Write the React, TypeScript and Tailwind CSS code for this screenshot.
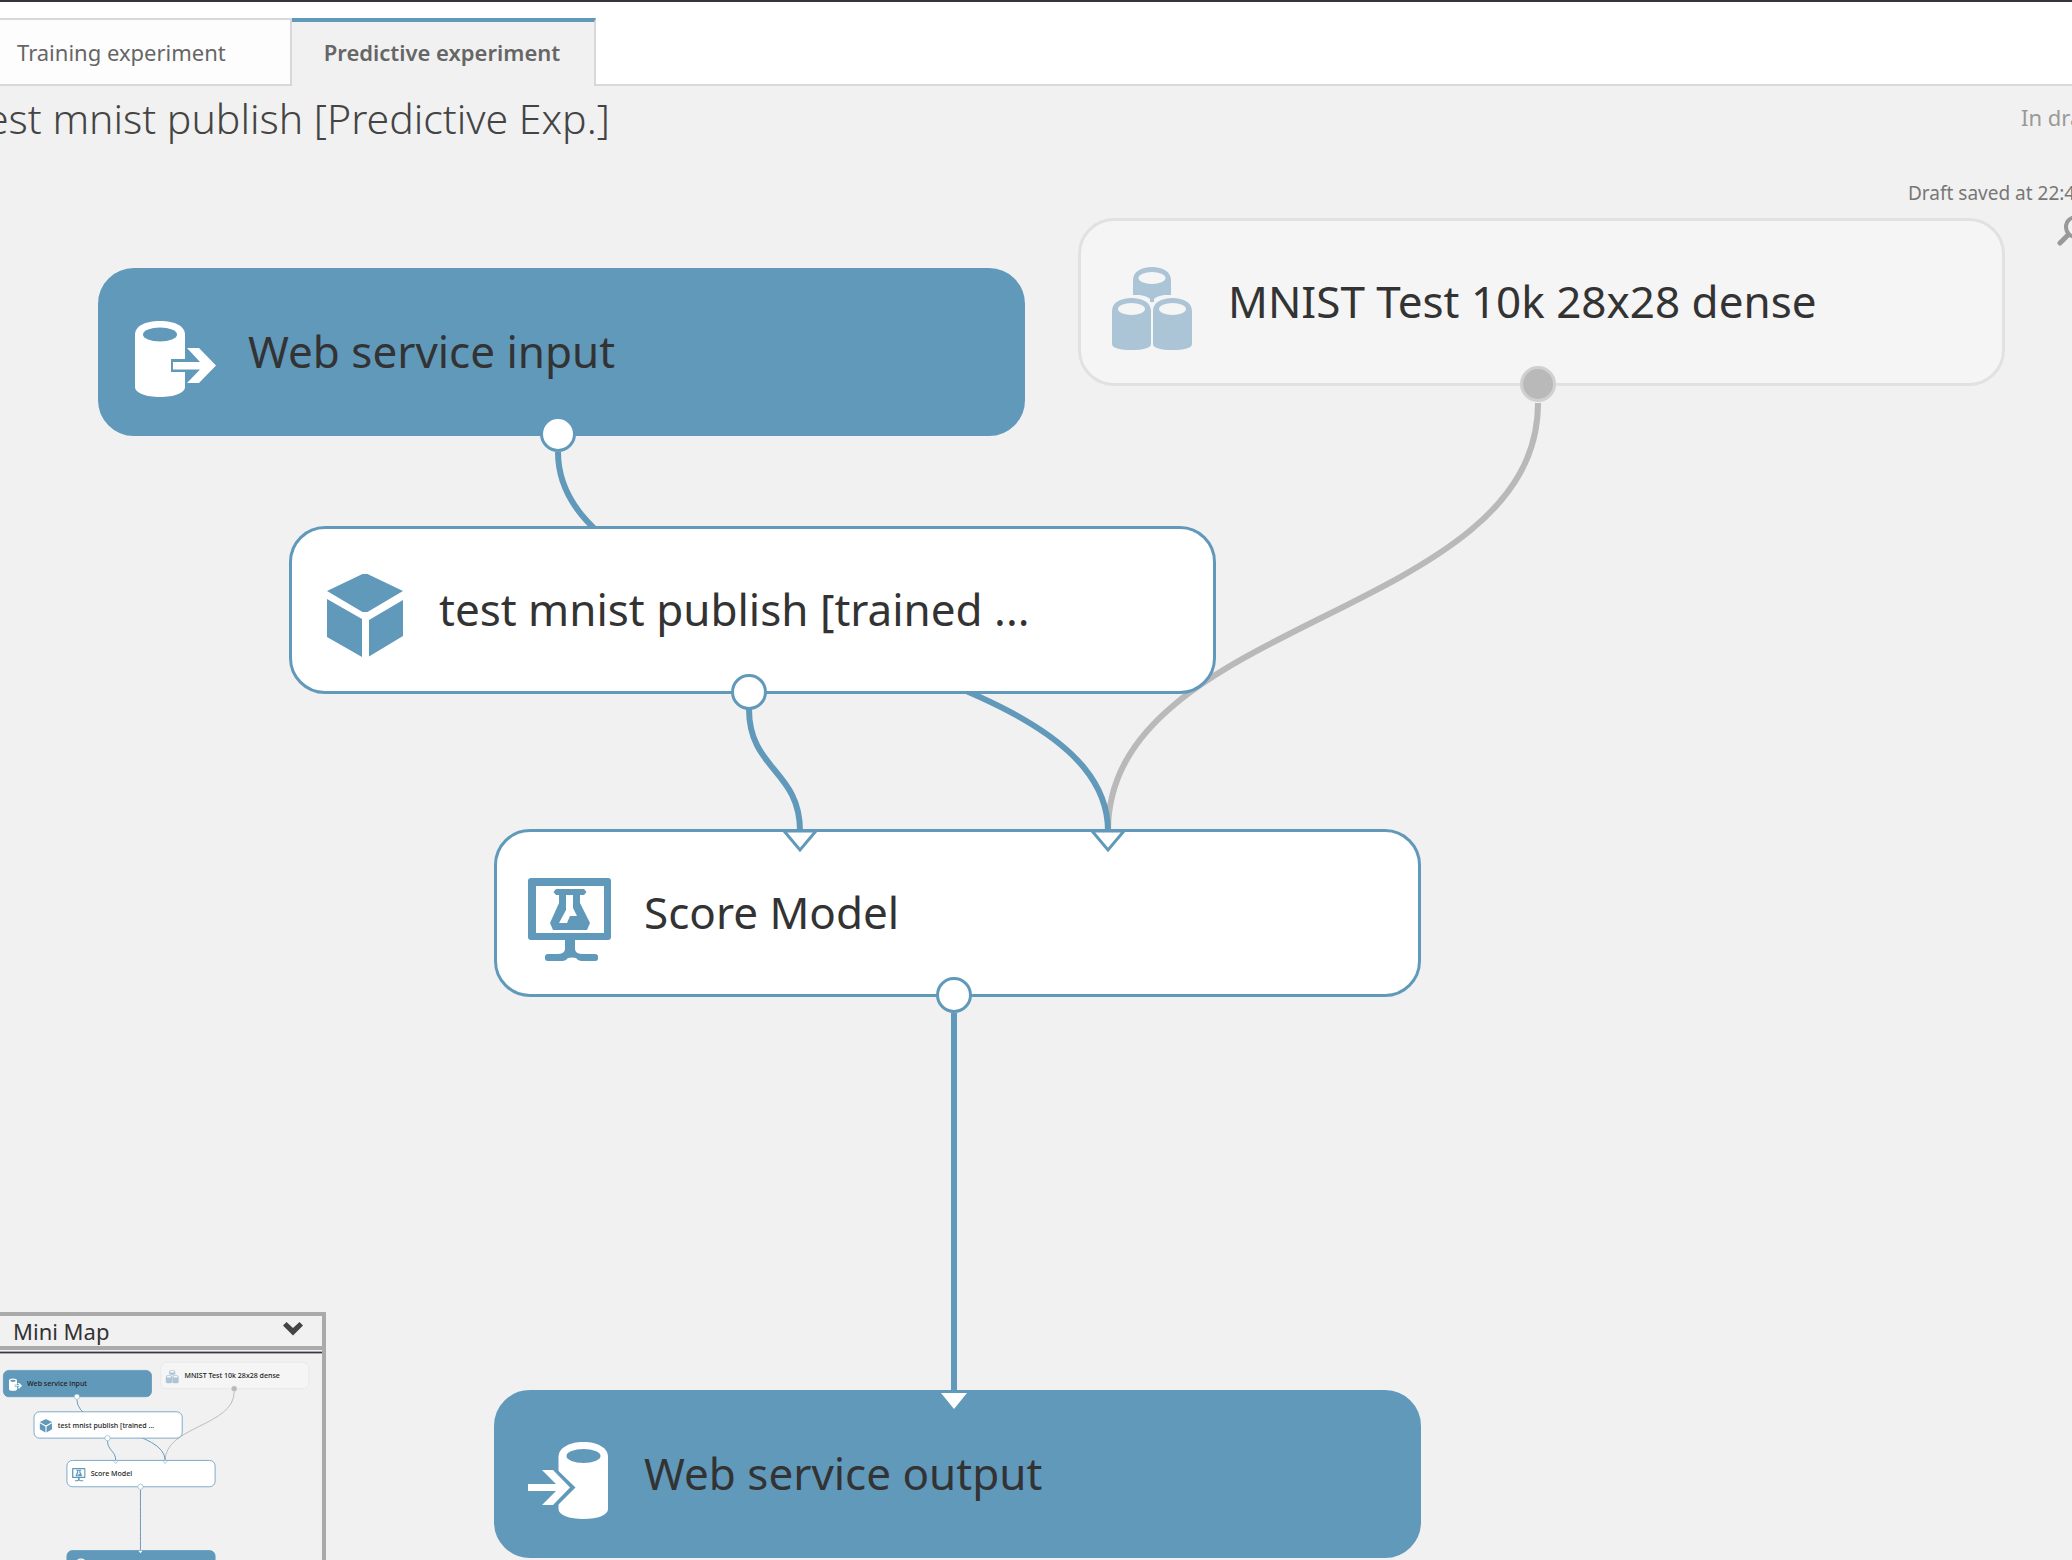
import React from "react";

type IconName = "input" | "dataset" | "model" | "score" | "output";
type Tone = "solid" | "plain" | "muted";

interface GraphNode {
  id: string;
  label: string;
  icon: IconName;
  tone: Tone;
  x: number;
  y: number;
  inputs: number[];
  output?: number;
}

const BLUE = "#6199bb";
const NODE_W = 927;
const NODE_H = 168;

const nodes: GraphNode[] = [
  { id: "in", label: "Web service input", icon: "input", tone: "solid", x: 98, y: 58, inputs: [], output: 460 },
  { id: "data", label: "MNIST Test 10k 28x28 dense", icon: "dataset", tone: "muted", x: 1078, y: 8, inputs: [], output: 460 },
  { id: "model", label: "test mnist publish [trained ...", icon: "model", tone: "plain", x: 289, y: 316, inputs: [], output: 460 },
  { id: "score", label: "Score Model", icon: "score", tone: "plain", x: 494, y: 619, inputs: [306, 614], output: 460 },
  { id: "out", label: "Web service output", icon: "output", tone: "solid", x: 494, y: 1180, inputs: [460] },
];

const edges = [
  { id: "data-score", from: [1538, 193], to: [1108, 621], color: "#b9b9b9" },
  { id: "in-score", from: [558, 242], to: [1108, 621], color: BLUE },
  { id: "model-score", from: [749, 499], to: [800, 621], color: BLUE },
  { id: "score-out", from: [954, 803], to: [954, 1182], color: BLUE },
];

function edgePath(from: number[], to: number[]) {
  const mid = (from[1] + to[1]) / 2;
  return `M${from[0]} ${from[1]}C${from[0]} ${mid} ${to[0]} ${mid} ${to[0]} ${to[1]}`;
}

function Edges() {
  return (
    <g fill="none" strokeWidth="6">
      {edges.map((e) => (
        <path key={e.id} d={edgePath(e.from, e.to)} stroke={e.color} />
      ))}
    </g>
  );
}

function IconShape({ name }: { name: IconName }) {
  if (name === "input")
    return (
      <g>
        <path fill="#fff" d="M5 21C5 12 15 7 30 7s25 5 25 14v52c0 6-11 10-25 10S5 79 5 73Z" />
        <ellipse cx="30" cy="20.500" rx="17" ry="7" fill={BLUE} />
        <path fill={BLUE} d="M41 45h16v13H41Z" />
        <path fill="#fff" d="M43 48h27L57 34h12l17 17.500L69 69H57l13-13.500H43Z" />
      </g>
    );
  if (name === "output")
    return (
      <g>
        <path fill="#fff" d="M32.500 21C32.500 12 43 6 57.500 6S82 12 82 21v52c0 6-10 10-24.500 10s-25-4-25-10Z" />
        <ellipse cx="57.500" cy="20" rx="17" ry="7" fill={BLUE} />
        <path fill={BLUE} d="M32 34.500 49.500 51.500 32 69Z" />
        <path fill="#fff" d="M2 48h28L16 34h11l17 17.500L27 69H16l14-14H2Z" />
      </g>
    );
  if (name === "dataset")
    return (
      <path
        fill="#abc5d7"
        fillRule="evenodd"
        d="M23 16C23 8 31 3 42 3s19 5 19 13v15h-4c-6 0-11 2-13 4v3h-4v-3c-2-2-7-4-13-4h-4ZM28.500 14a13.500 6 0 1 0 27 0a13.500 6 0 1 0-27 0ZM2 47C2 39 10 34 21.500 34S41 39 41 47v33c0 4-8 6-19.500 6S2 84 2 80ZM8 45a13.500 6 0 1 0 27 0a13.500 6 0 1 0-27 0ZM43 47c0-8 8-13 19.500-13S82 39 82 47v33c0 4-8 6-19.500 6S43 84 43 80ZM49 45a13.500 6 0 1 0 27 0a13.500 6 0 1 0-27 0Z"
      />
    );
  if (name === "model")
    return (
      <path
        fill={BLUE}
        d="M41.500 2h5L82 19 46.500 40h-5L6 19ZM6 27l35 20v38L6 65ZM82 28v36L48 84.500V48Z"
      />
    );
  return (
    <g fill={BLUE}>
      <path
        fillRule="evenodd"
        d="M5 3h77q3 0 3 3v56q0 3-3 3H49v9q0 5 8 5h12q3 0 3 2.500v2q0 2.500-3 2.500H55q-3 0-5-3-4-1-8 0-2 3-5 3H22q-3 0-3-2.500v-2q0-2.500 3-2.500h9q8 0 8-5v-9H5q-3 0-3-3V6q0-3 3-3ZM10 11v47h68V11Z"
      />
      <path
        fillRule="evenodd"
        d="M30 14h28l2.500 3-2.500 3h-4v8l10 20-3 7H27l-3-7 9-20v-8h-3l-2.500-3ZM40 20v15l-7 13h8l3-7h7l-4-8V20Z"
      />
    </g>
  );
}

const frame: Record<Tone, string> = {
  solid: "border-[#6199bb] bg-[#6199bb]",
  plain: "border-[#6199bb] bg-white",
  muted: "border-[#e1e1e1] bg-[#f5f5f5]",
};

function Ports({ node }: { node: GraphNode }) {
  const muted = node.tone === "muted";
  return (
    <g strokeWidth="3">
      {node.inputs.map((x) =>
        node.tone === "solid" ? (
          <path key={x} d={`M${x - 13} 3h26l-13 16Z`} fill="#fff" />
        ) : (
          <path key={x} d={`M${x - 16} 2h32l-16 19Z`} fill="#fff" stroke={BLUE} />
        ),
      )}
      {node.output !== undefined && (
        <circle cx={node.output} cy={NODE_H - 2} r="16.500" fill={muted ? "#b9b9b9" : "#fff"} stroke={muted ? "#d0d0d0" : BLUE} />
      )}
    </g>
  );
}

function NodeCard({ node }: { node: GraphNode }) {
  return (
    <article
      className={`absolute flex h-[168px] w-[927px] items-center gap-[30px] rounded-[36px] border-[3px] pt-3 pl-[29px] ${frame[node.tone]}`}
      style={{ left: node.x, top: node.y }}
    >
      <svg viewBox="0 0 88 88" className="size-[88px] shrink-0" aria-hidden="true">
        <IconShape name={node.icon} />
      </svg>
      <h2 className="pb-[14px] text-[44px] leading-[60px] whitespace-nowrap text-[#333]">{node.label}</h2>
      <svg viewBox="0 0 927 168" className="pointer-events-none absolute -top-[3px] -left-[3px] h-[168px] w-[927px] overflow-visible" aria-hidden="true">
        <Ports node={node} />
      </svg>
    </article>
  );
}

function MiniMap() {
  return (
    <aside className="absolute bottom-0 left-0 flex h-[248px] w-[326px] flex-col border-t-4 border-r-4 border-[#aaa] bg-[#f1f1f1]">
      <header className="flex h-[34px] items-center justify-between border-b-4 border-[#aaa] pr-[18px] pl-[13px]">
        <h2 className="text-[22px] leading-[30px] text-[#333]">Mini Map</h2>
        <button type="button" aria-label="Collapse mini map" className="pb-1">
          <svg viewBox="0 0 22 16" className="h-4 w-[22px]" aria-hidden="true">
            <path d="M1 4.500 4.500 1 11 7l6.500-6L21 4.500 11 14.500Z" fill="#444" />
          </svg>
        </button>
      </header>
      <div className="mt-px h-1 border-t border-b border-[#aaa] bg-[#33384a]" />
      <svg viewBox="79 -42 2006 1283" className="h-[206px] w-[322px] shrink-0" role="img" aria-label="Experiment overview">
        <Edges />
        {nodes.map((n) => (
          <g key={n.id} transform={`translate(${n.x} ${n.y})`}>
            <rect
              x="2"
              y="2"
              width={NODE_W - 4}
              height={NODE_H - 4}
              rx="34"
              strokeWidth="5"
              fill={n.tone === "solid" ? BLUE : n.tone === "plain" ? "#fff" : "#f5f5f5"}
              stroke={n.tone === "muted" ? "#e6e6e6" : BLUE}
            />
            <g transform="translate(32 46)">
              <IconShape name={n.icon} />
            </g>
            <text x="150" y="102" fontSize="44" fontWeight="500" fill="#222">
              {n.label}
            </text>
            <Ports node={n} />
          </g>
        ))}
      </svg>
    </aside>
  );
}

export default function App() {
  return (
    <div className="flex min-h-screen flex-col overflow-hidden border-t-2 border-[#33363b] bg-[#f1f1f1] font-['Noto_Sans',sans-serif]">
      <nav className="flex h-[84px] items-stretch bg-white pt-4 text-[22px] leading-[30px] text-[#666]" role="tablist">
        <button type="button" role="tab" aria-selected="false" className="w-[292px] border-t-2 border-r-2 border-b-2 border-[#d8d8d8] bg-[#fdfdfd] pl-[17px] text-left">
          Training experiment
        </button>
        <button type="button" role="tab" aria-selected="true" className="w-[304px] border-t-4 border-r-2 border-t-[#6199bb] border-r-[#d8d8d8] bg-[#f1f1f1] pr-0.5 pb-1 text-center font-semibold">
          Predictive experiment
        </button>
        <div className="flex-1 border-b-2 border-[#d8d8d8]" />
      </nav>

      <header className="flex h-[124px] justify-between overflow-hidden">
        <h1 className="-ml-7 text-[41px] leading-[64px] font-light whitespace-nowrap text-[#444]">test mnist publish [Predictive Exp.]</h1>
        <div className="flex w-[164px] flex-col whitespace-nowrap">
          <p className="pt-[15px] pl-[113px] text-[22px] leading-[32px] text-[#999]">In draft</p>
          <p className="pt-[46px] text-[19px] leading-[28px] text-[#777]">Draft saved at 22:4</p>
        </div>
      </header>

      <main className="relative flex-1 overflow-hidden">
        <svg className="absolute inset-0 size-full" aria-hidden="true">
          <Edges />
        </svg>
        {nodes.map((n) => (
          <NodeCard key={n.id} node={n} />
        ))}
        <button type="button" aria-label="Zoom" className="absolute top-1 -right-4 size-8">
          <svg viewBox="0 0 32 32" className="size-8" fill="none" stroke="#999" aria-hidden="true">
            <circle cx="20" cy="13" r="10" strokeWidth="4" />
            <path d="M12 21 4 29" strokeWidth="5" strokeLinecap="round" />
          </svg>
        </button>
        <MiniMap />
      </main>
    </div>
  );
}
